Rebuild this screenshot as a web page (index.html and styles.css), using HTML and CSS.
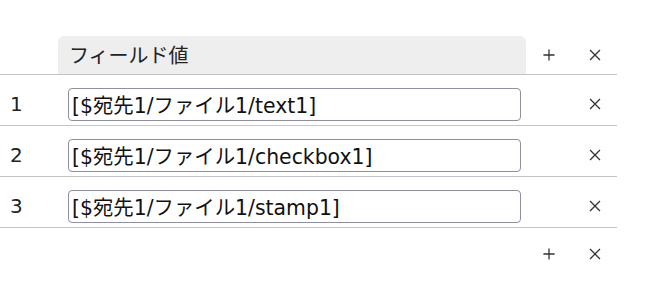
FILE: index.html
```html
<!DOCTYPE html>
<html lang="ja">

<head>
    <meta charset="UTF-8">
    <meta name="viewport" content="width=device-width, initial-scale=1.0">
    <title>フィールド値</title>
    <link rel="stylesheet" href="styles.css">
</head>

<body>
    <div class="wrap">
        <table class="grid">
            <thead>
                <tr>
                    <th class="num"></th>
                    <th class="field">フィールド値</th>
                    <th class="act">
                        <svg class="ico" viewBox="0 0 14 14"><path d="M7 0.5v13M0.5 7h13" /></svg>
                    </th>
                    <th class="act">
                        <svg class="ico" viewBox="0 0 14 14"><path d="M1.2 1.2l11.6 11.6M12.8 1.2l-11.6 11.6" /></svg>
                    </th>
                </tr>
            </thead>
            <tbody>
                <tr>
                    <td class="num">1</td>
                    <td class="val"><input type="text" value="[$宛先1/ファイル1/text1]"></td>
                    <td class="act"></td>
                    <td class="act"><svg class="ico" viewBox="0 0 14 14"><path d="M1.2 1.2l11.6 11.6M12.8 1.2l-11.6 11.6" /></svg></td>
                </tr>
                <tr>
                    <td class="num">2</td>
                    <td class="val"><input type="text" value="[$宛先1/ファイル1/checkbox1]"></td>
                    <td class="act"></td>
                    <td class="act"><svg class="ico" viewBox="0 0 14 14"><path d="M1.2 1.2l11.6 11.6M12.8 1.2l-11.6 11.6" /></svg></td>
                </tr>
                <tr>
                    <td class="num">3</td>
                    <td class="val"><input type="text" value="[$宛先1/ファイル1/stamp1]"></td>
                    <td class="act"></td>
                    <td class="act"><svg class="ico" viewBox="0 0 14 14"><path d="M1.2 1.2l11.6 11.6M12.8 1.2l-11.6 11.6" /></svg></td>
                </tr>
            </tbody>
            <tfoot>
                <tr>
                    <td class="num"></td>
                    <td></td>
                    <td class="act"><svg class="ico" viewBox="0 0 14 14"><path d="M7 0.5v13M0.5 7h13" /></svg></td>
                    <td class="act"><svg class="ico" viewBox="0 0 14 14"><path d="M1.2 1.2l11.6 11.6M12.8 1.2l-11.6 11.6" /></svg></td>
                </tr>
            </tfoot>
        </table>
    </div>
</body>

</html>
```

FILE: styles.css
```css
* {
    padding: 0;
    margin: 0;
    box-sizing: border-box;
}

body {
    background-color: #fff;
    color: #222;
    font-family: "DejaVu Sans", "Noto Sans CJK JP", sans-serif;
    font-size: 20px;
}

.wrap {
    padding-top: 36px;
}

.grid {
    width: 617px;
    border-collapse: collapse;
    table-layout: fixed;
}

.grid .num {
    width: 58px;
    padding-left: 10px;
    text-align: left;
    font-weight: normal;
}

.grid .act {
    width: 46px;
    text-align: center;
}

.grid .act:last-child {
    width: 45px;
}

.grid thead th {
    height: 38px;
    border-bottom: 1px solid #c4c4c4;
    vertical-align: middle;
}

.grid thead .field {
    background-color: #eee;
    border-radius: 6px 6px 0 0;
    text-align: left;
    font-weight: normal;
    padding-left: 11px;
}

.grid tbody td {
    height: 50.4px;
    padding-top: 13px;
    padding-bottom: 4px;
    border-bottom: 1px solid #c4c4c4;
    vertical-align: middle;
}

.grid .val {
    padding-left: 10px;
    padding-right: 5px;
}

.grid input {
    display: block;
    width: 100%;
    height: 33px;
    border: 1px solid #8f8f9d;
    border-radius: 4px;
    padding: 0 3px;
    font: inherit;
    font-size: 20.4px;
    color: #111;
    background-color: #fff;
}

.grid tfoot td {
    height: 54px;
    vertical-align: middle;
}

.ico {
    display: block;
    width: 12px;
    height: 12px;
    margin: 0 auto;
    fill: none;
    stroke: #333;
    stroke-width: 1.5;
}
```
